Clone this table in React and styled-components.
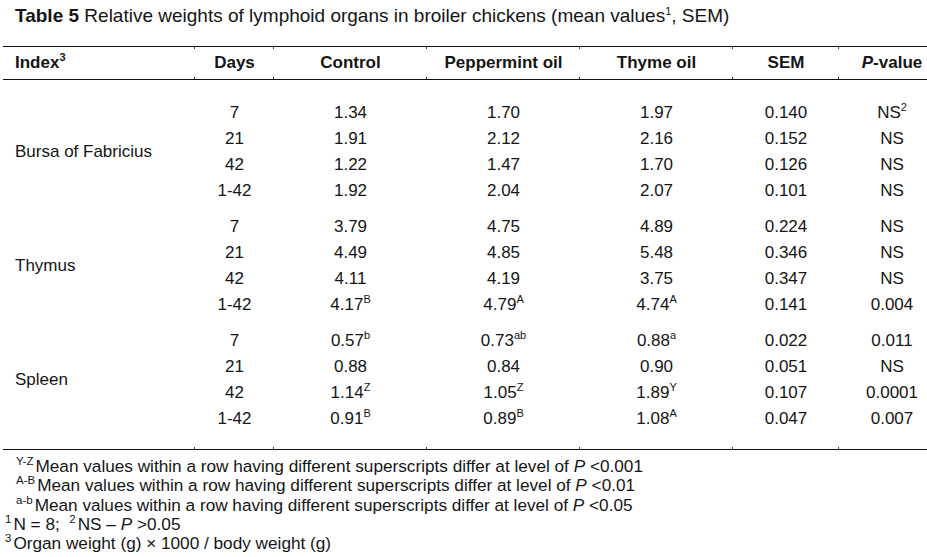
import React from "react";
import styled, { createGlobalStyle } from "styled-components";

const GlobalStyle = createGlobalStyle`
  html, body {
    margin: 0;
    padding: 0;
    background: #ffffff;
    overflow: hidden;
  }
  body {
    font-family: "Liberation Sans", Arial, sans-serif;
    color: #151515;
  }
`;

const Page = styled.div`
  width: 927px;
  height: 557px;
  overflow: hidden;
`;

const Title = styled.div`
  font-size: 19px;
  line-height: 22px;
  padding: 5px 0 0 15px;
  white-space: nowrap;
  b {
    font-weight: bold;
  }
`;

const Table = styled.table`
  margin: 19px 0 0 3px;
  border-collapse: collapse;
  table-layout: fixed;
  width: 942px;
  font-size: 17px;
  border-top: 1px solid #111;
  border-bottom: 1px solid #111;
`;

const Head = styled.th`
  position: relative;
  height: 32px;
  padding: 0;
  font-weight: bold;
  text-align: ${(p) => (p.$left ? "left" : "center")};
  padding-left: ${(p) => (p.$left ? "12px" : "0")};
  border-bottom: 1px solid #111;
  vertical-align: middle;
  white-space: nowrap;

  &::before,
  &::after {
    content: "";
    display: ${(p) => (p.$left ? "none" : "block")};
    position: absolute;
    left: -1px;
    width: 1px;
    height: 2px;
    background: #333;
  }
  &::before {
    top: 0;
  }
  &::after {
    bottom: 0;
  }
`;

const Cell = styled.td`
  position: relative;
  padding: 0;
  padding-top: ${(p) => p.$top || 0}px;
  padding-bottom: ${(p) => p.$bottom || 0}px;
  height: 26px;
  text-align: center;
  vertical-align: top;
  line-height: 26px;
  white-space: nowrap;

  ${(p) =>
    p.$tick &&
    `&::after {
      content: "";
      position: absolute;
      left: -1px;
      bottom: 0;
      width: 1px;
      height: 2px;
      background: #333;
    }`}
`;

const Label = styled.td`
  padding: 0 0 0 12px;
  text-align: left;
  vertical-align: middle;
  white-space: nowrap;
  padding-top: ${(p) => p.$top || 0}px;
  padding-bottom: ${(p) => p.$bottom || 0}px;
`;

const Sup = styled.sup`
  font-size: 11px;
  line-height: 0;
  vertical-align: 7px;
`;

const Notes = styled.div`
  margin-top: 7px;
  font-size: 17.2px;
  line-height: 19.3px;
  padding-left: 5px;
`;

const Note = styled.div`
  padding-left: ${(p) => (p.$indent ? 11 : 0)}px;
  white-space: nowrap;
`;

const NoteSup = styled(Sup)`
  font-size: 11.5px;
  margin-right: 2px;
`;

const columns = [192, 79, 153, 153, 153, 106, 106];

const groups = [
  {
    name: "Bursa of Fabricius",
    top: 20,
    rows: [
      ["7", "1.34", "1.70", "1.97", "0.140", ["NS", "2"]],
      ["21", "1.91", "2.12", "2.16", "0.152", "NS"],
      ["42", "1.22", "1.47", "1.70", "0.126", "NS"],
      ["1-42", "1.92", "2.04", "2.07", "0.101", "NS"],
    ],
  },
  {
    name: "Thymus",
    top: 10,
    rows: [
      ["7", "3.79", "4.75", "4.89", "0.224", "NS"],
      ["21", "4.49", "4.85", "5.48", "0.346", "NS"],
      ["42", "4.11", "4.19", "3.75", "0.347", "NS"],
      ["1-42", ["4.17", "B"], ["4.79", "A"], ["4.74", "A"], "0.141", "0.004"],
    ],
  },
  {
    name: "Spleen",
    top: 10,
    bottom: 17,
    rows: [
      ["7", ["0.57", "b"], ["0.73", "ab"], ["0.88", "a"], "0.022", "0.011"],
      ["21", "0.88", "0.84", "0.90", "0.051", "NS"],
      ["42", ["1.14", "Z"], ["1.05", "Z"], ["1.89", "Y"], "0.107", "0.0001"],
      ["1-42", ["0.91", "B"], ["0.89", "B"], ["1.08", "A"], "0.047", "0.007"],
    ],
  },
];

const Value = ({ v }) =>
  Array.isArray(v) ? (
    <>
      {v[0]}
      <Sup>{v[1]}</Sup>
    </>
  ) : (
    v
  );

export default function App() {
  return (
    <Page>
      <GlobalStyle />
      <Title>
        <b>Table 5</b> Relative weights of lymphoid organs in broiler chickens (mean values<Sup>1</Sup>, SEM)
      </Title>
      <Table>
        <colgroup>
          {columns.map((w, i) => (
            <col key={i} style={{ width: w }} />
          ))}
        </colgroup>
        <thead>
          <tr>
            <Head $left>
              Index<Sup>3</Sup>
            </Head>
            <Head>Days</Head>
            <Head>Control</Head>
            <Head>Peppermint oil</Head>
            <Head>Thyme oil</Head>
            <Head>SEM</Head>
            <Head>
              <i>P</i>-value
            </Head>
          </tr>
        </thead>
        <tbody>
          {groups.map((g) =>
            g.rows.map((row, ri) => {
              const top = ri === 0 ? g.top : 0;
              const last = ri === g.rows.length - 1;
              const bottom = last && g.bottom ? g.bottom : 0;
              return (
                <tr key={g.name + ri}>
                  {ri === 0 && (
                    <Label rowSpan={g.rows.length} $top={g.top} $bottom={g.bottom}>
                      {g.name}
                    </Label>
                  )}
                  {row.map((v, ci) => (
                    <Cell key={ci} $top={top} $bottom={bottom} $tick={bottom > 0}>
                      <Value v={v} />
                    </Cell>
                  ))}
                </tr>
              );
            })
          )}
        </tbody>
      </Table>
      <Notes>
        <Note $indent>
          <NoteSup>Y-Z</NoteSup>Mean values within a row having different superscripts differ at level of <i>P</i> &lt;0.001
        </Note>
        <Note $indent>
          <NoteSup>A-B</NoteSup>Mean values within a row having different superscripts differ at level of <i>P</i> &lt;0.01
        </Note>
        <Note $indent>
          <NoteSup>a-b</NoteSup>Mean values within a row having different superscripts differ at level of <i>P</i> &lt;0.05
        </Note>
        <Note>
          <NoteSup>1</NoteSup>N = 8;&nbsp; <NoteSup>2</NoteSup>NS – <i>P</i> &gt;0.05
        </Note>
        <Note>
          <NoteSup>3</NoteSup>Organ weight (g) × 1000 / body weight (g)
        </Note>
      </Notes>
    </Page>
  );
}
